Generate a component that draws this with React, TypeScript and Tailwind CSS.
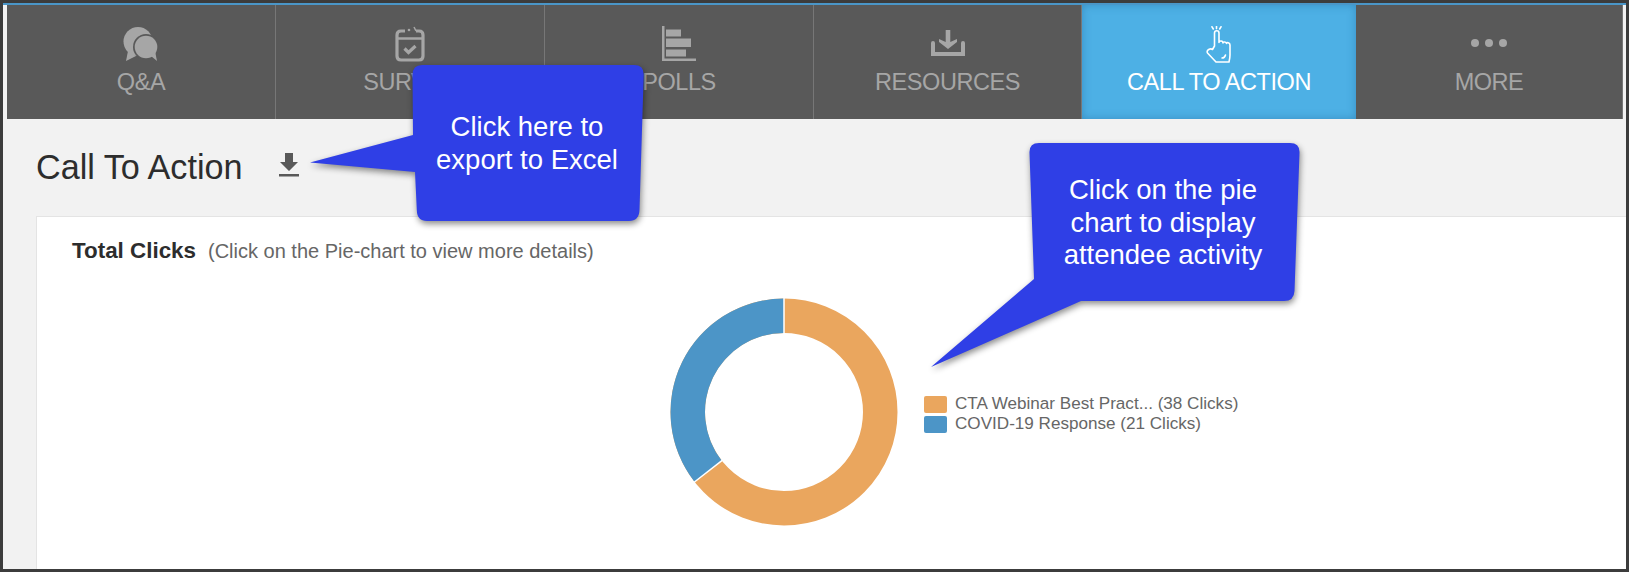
import { ReactNode } from 'react';

const CalloutBlue = '#2f3fe6';

function QaIcon() {
    return (
        <svg width="36" height="36" viewBox="0 0 36 36" fill="#a6a6a6">
            <circle cx="15" cy="15.500" r="14.500" />
            <path d="M5 25L3 35l10-5z" />
            <circle cx="23" cy="21" r="13" fill="#595959" />
            <circle cx="23" cy="21" r="11.300" />
            <path d="M28 30l6 5-2-10z" />
        </svg>
    );
}

function SurveyIcon() {
    return (
        <svg width="30" height="36" viewBox="0 0 30 36" fill="none" stroke="#a6a6a6" strokeWidth="3.200">
            <path d="M10 5H6Q2 5 2 9V30Q2 34 6 34H24Q28 34 28 30V9Q28 5 24 5H21" />
            <path d="M2 12.500H28" strokeWidth="2.500" />
            <path d="M9.500 22.500l4 4 7-6.500" strokeWidth="3.200" />
            <circle cx="14" cy="4" r="1.300" fill="#a6a6a6" stroke="none" />
            <path d="M19 1l2 4" strokeWidth="1.500" />
        </svg>
    );
}

function PollsIcon() {
    return (
        <svg width="34" height="35" viewBox="0 0 34 35" fill="#a6a6a6">
            <rect x="0" y="0" width="2.500" height="35" />
            <rect x="0" y="32.500" width="34" height="2.500" />
            <rect x="4" y="3.500" width="15" height="7" />
            <rect x="4" y="12.500" width="25" height="8.500" />
            <rect x="4" y="23.500" width="20" height="7" />
        </svg>
    );
}

function ResourcesIcon() {
    return (
        <svg width="34" height="30" viewBox="0 0 34 30" fill="#a6a6a6">
            <path d="M2 17V28H32V17" fill="none" stroke="#a6a6a6" strokeWidth="4" strokeLinecap="round" />
            <path d="M8 13l6.700 3V4h4.600v12l6.700-3v3l-9 7-9-7z" />
        </svg>
    );
}

function HandIcon() {
    return (
        <svg width="26" height="37" viewBox="0 0 26 37" fill="none" stroke="#ffffff" strokeWidth="1.600" strokeLinejoin="round" strokeLinecap="round">
            <path d="M8.500 20V7c0-3 4.500-3 4.500 0v9.500c0-2 4-2 4 .5 0-1.500 3.500-1.500 3.500.5 0-1.500 3.500-1 3.500 1.500v10c0 3-.5 5-1 7H10L1.500 27c-1.500-3 3-5 5-3.500z" />
            <path d="M16 32c2 0 3-1 3.500-3" />
            <path d="M6 .8L7.300 3M10.500 .3V2.600M15 .8L13.700 3" />
        </svg>
    );
}

function MoreIcon() {
    return (
        <svg width="36" height="10" viewBox="0 0 36 10" fill="#a6a6a6">
            <circle cx="4" cy="5" r="4" />
            <circle cx="18" cy="5" r="4" />
            <circle cx="32" cy="5" r="4" />
        </svg>
    );
}

function DownloadIcon() {
    return (
        <svg width="20" height="24" viewBox="0 0 20 24" fill="#595959">
            <path d="M6 0h8v9h5l-9 9-9-9h5z" />
            <rect x="0" y="21" width="20" height="2.500" />
        </svg>
    );
}

function Tab({ label, icon, width, active }: { label: string; icon: ReactNode; width: string; active?: boolean }) {
    return (
        <div className={`${width} h-full shrink-0 flex flex-col items-center ${active ? 'bg-[#4db0e5] text-white shadow-[inset_0_0_8px_rgba(30,100,150,0.45)]' : 'bg-[#595959] text-[#a6a6a6] border-r border-[#777777]'}`}>
            <div className="h-[61px] pt-[21px] flex items-start justify-center">{icon}</div>
            <div className="text-[23.5px] tracking-[-0.45px] leading-[32px]">{label}</div>
        </div>
    );
}

function Donut() {
    return (
        <svg width="230" height="230" viewBox="-115 -115 230 230">
            <circle r="96.250" fill="none" stroke="#eaa65e" strokeWidth="34.500" />
            <path d="M0 -113.500A113.500 113.500 0 0 0 -89.400 69.900L-62.200 48.700A79 79 0 0 1 0 -79Z" fill="#4c95c7" />
            <path d="M0 -114V-78M-90.200 70.500L-61.500 48.100" stroke="#ffffff" strokeWidth="1.500" />
        </svg>
    );
}

function LegendRow({ color, text }: { color: string; text: string }) {
    return (
        <div className="flex items-center h-5 gap-2">
            <span className={`w-[23px] h-[17px] rounded-[2px] ${color}`} />
            <span>{text}</span>
        </div>
    );
}

export default function App() {
    return (
        <div className="relative w-[1629px] h-[572px] overflow-hidden bg-[#3c3c3c] p-[3px] font-['Liberation_Sans',Arial,sans-serif]">
            <div className="h-full bg-[#f2f2f2] border-t-2 border-[#4a96c8] flex flex-col">
                {/* Tabs */}
                <div className="h-[114px] shrink-0 flex pl-1 pr-[3px]">
                    <Tab label="Q&A" icon={<QaIcon />} width="w-[269px]" />
                    <Tab label="SURVEY" icon={<SurveyIcon />} width="w-[269px]" />
                    <Tab label="POLLS" icon={<PollsIcon />} width="w-[269px]" />
                    <Tab label="RESOURCES" icon={<ResourcesIcon />} width="w-[268px]" />
                    <Tab label="CALL TO ACTION" icon={<HandIcon />} width="w-[274px]" active />
                    <Tab label="MORE" icon={<div className="pt-[12px]"><MoreIcon /></div>} width="flex-1" />
                </div>

                {/* Page */}
                <div className="flex-1 pl-[33px] min-h-0">
                    <div className="h-[97px] flex items-center gap-[36px]">
                        <h1 className="text-[34.2px] leading-none text-[#2d2d2d]">Call To Action</h1>
                        <div className="mb-[6px]"><DownloadIcon /></div>
                    </div>
                    <div className="h-[353px] bg-white border-l border-t border-[#e4e4e4] pl-[35px] pt-[22px]">
                        <div className="flex items-baseline gap-[12px] leading-[24px]">
                            <span className="text-[22.4px] font-bold text-[#2d2d2d]">Total Clicks</span>
                            <span className="text-[20px] text-[#666666]">(Click on the Pie-chart to view more details)</span>
                        </div>
                        <div className="flex pl-[597px] pt-[34px]">
                            <Donut />
                            <div className="pl-[25px] pt-[97px] text-[17.1px] text-[#666666]">
                                <LegendRow color="bg-[#eaa65e]" text="CTA Webinar Best Pract... (38 Clicks)" />
                                <LegendRow color="bg-[#4c95c7]" text="COVID-19 Response (21 Clicks)" />
                            </div>
                        </div>
                    </div>
                </div>
            </div>

            {/* Callout shapes */}
            <svg className="absolute inset-0 pointer-events-none" width="1629" height="572" viewBox="0 0 1629 572">
                <path
                    d="M422 65H634Q644 65 643.700 75L639.500 210Q639 221 629 221H427Q417 221 416.800 210L415 172L310 162.500L413 135L412.500 75Q412.500 65 422 65Z"
                    fill={CalloutBlue}
                    style={{ filter: 'drop-shadow(1px 3px 3px rgba(0,0,0,0.45))' }}
                />
                <path
                    d="M1039 143H1290Q1300 143 1299.500 153L1294.500 291Q1294 301 1284 301H1081L931 367L1034 279L1029.500 153Q1029 143 1039 143Z"
                    fill={CalloutBlue}
                    style={{ filter: 'drop-shadow(1px 3px 3px rgba(0,0,0,0.45))' }}
                />
            </svg>

            {/* Callout text */}
            <div className="absolute left-[417px] top-[111px] w-[220px] text-center text-white text-[27.5px] leading-[32.5px]">
                Click here to<br />export to Excel
            </div>
            <div className="absolute left-[1033px] top-[174px] w-[260px] text-center text-white text-[27.5px] leading-[32.5px]">
                Click on the pie<br />chart to display<br />attendee activity
            </div>
        </div>
    );
}
